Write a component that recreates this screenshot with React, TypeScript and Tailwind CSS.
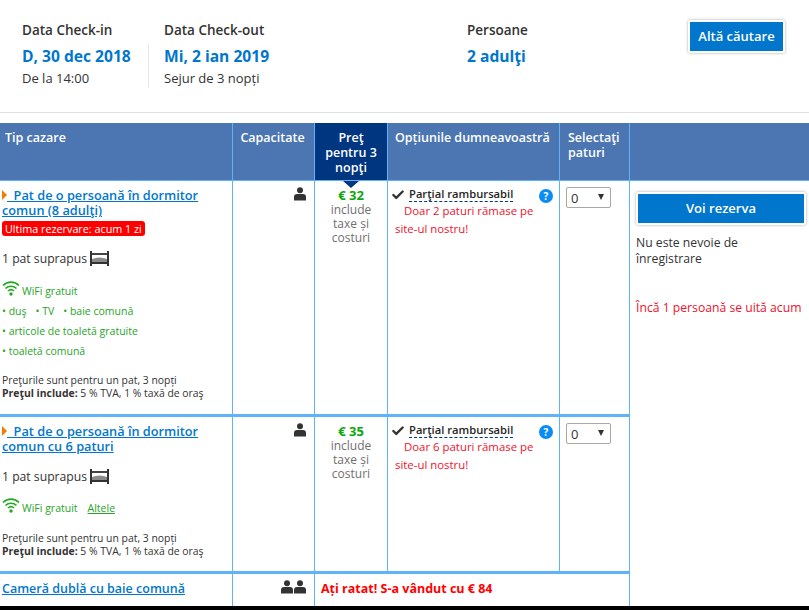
import { Check } from "lucide-react";

function Person({ className = "" }: { className?: string }) {
  return (
    <svg viewBox="0 0 12 14" className={"w-3 h-3.5 text-[#333] fill-current " + className}>
      <circle cx="6" cy="3.2" r="3" />
      <path d="M0 13.500V10a3 3 0 0 1 3-3h6a3 3 0 0 1 3 3v3.500z" />
    </svg>
  );
}

function Bed() {
  return (
    <svg viewBox="0 0 19 15" className="w-[19px] h-[15px] ml-[3px] -mt-[2px]">
      <rect x="0" y="0" width="2" height="15" fill="#333" />
      <rect x="17" y="0" width="2" height="15" fill="#333" />
      <rect x="2" y="2" width="15" height="2" fill="#444" />
      <path d="M2 8q7.500-3 15 0v3H2z" fill="#8a8a8a" />
      <rect x="2" y="11" width="15" height="2" fill="#333" />
    </svg>
  );
}

function Wifi() {
  return (
    <svg viewBox="0 0 18 16" className="w-[18px] h-4 shrink-0 fill-none stroke-[#22a922]">
      <path d="M1 5.500C5.500 1 12.500 1 17 5.500" strokeWidth="1.600" />
      <path d="M3.500 8.500c3-3 8-3 11 0" strokeWidth="1.600" />
      <path d="M6 11c1.700-1.500 4.300-1.500 6 0" strokeWidth="1.600" />
      <circle cx="9" cy="14" r="1.700" className="fill-[#22a922] stroke-none" />
    </svg>
  );
}

function Arrow() {
  return <span className="inline-block w-0 h-0 border-y-[5px] border-y-transparent border-l-[5px] border-l-[#f07d00]" />;
}

function Options({ left }: { left: number }) {
  return (
    <div className="relative border-r border-[#5fb3fb] pl-[3px] pt-[6px]">
      <div className="flex items-center text-[11.2px] leading-[14px]">
        <Check size={14} strokeWidth={4} className="text-[#333] mr-[4px] shrink-0" />
        <span className="font-semibold text-[#262626] border-b border-dashed border-[#003580]">Parţial rambursabil</span>
      </div>
      <span className="absolute right-[6px] top-[8px] w-[14px] h-[14px] rounded-full bg-[#0a8cf5] text-white text-[10px] leading-[14px] font-bold text-center">?</span>
      <p className="text-[11.4px] leading-[18px] text-[#f0122d] pr-2">
        <span className="pl-[13px]">Doar {left} paturi rămase pe</span>
        <br />
        <span className="pl-[4px]">site-ul nostru!</span>
      </p>
    </div>
  );
}

function Price({ value }: { value: number }) {
  return (
    <div className="h-full border-r border-[#5fb3fb] pt-[7px] text-center">
      <div className="text-[13px] leading-[15px] font-bold text-[#0aa80a]">€ {value}</div>
      <div className="text-[12px] leading-[14px] text-[#707070]">
        include
        <br />
        taxe și
        <br />
        costuri
      </div>
    </div>
  );
}

function Select() {
  return (
    <div className="border-r border-[#5fb3fb] pl-[6px] pt-[6px]">
      <div className="relative w-[45px] h-[21px] border border-[#a8a8a8] rounded-[2px] bg-white pl-1 text-[13px] leading-[21px] text-[#333]">
        0
        <span className="absolute right-[6px] top-[6px] w-0 h-0 border-x-[3.500px] border-x-transparent border-t-[6px] border-t-[#333]" />
      </div>
    </div>
  );
}

function PriceNote() {
  return (
    <div className="text-[10.4px] leading-[13px] text-[#333] whitespace-nowrap">
      Preţurile sunt pentru un pat, 3 nopți
      <br />
      <span className="font-bold">Preţul include:</span> 5 % TVA, 1 % taxă de oraş
    </div>
  );
}

export default function App() {
  return (
    <div className="w-[809px] h-[610px] overflow-hidden bg-black font-['Open_Sans',sans-serif]">
      <div className="h-[606px] bg-white">
        <div className="flex h-[112px]">
          <div className="pl-[22px] pt-[22px] w-[148px] text-[#333]">
            <div className="text-[13.500px] leading-4 font-semibold whitespace-nowrap">Data Check-in</div>
            <div className="text-[15.600px] leading-5 font-bold text-[#0077cc] mt-[8px] whitespace-nowrap">D, 30 dec 2018</div>
            <div className="text-[13px] leading-4 mt-[4px]">De la 14:00</div>
          </div>
          <div className="relative pl-[16px] pt-[22px] w-[319px] text-[#333] before:content-[''] before:absolute before:left-0 before:top-[44px] before:h-[44px] before:w-px before:bg-[#e6e6e6]">
            <div className="text-[13.500px] leading-4 font-semibold">Data Check-out</div>
            <div className="text-[15.600px] leading-5 font-bold text-[#0077cc] mt-[8px] whitespace-nowrap">Mi, 2 ian 2019</div>
            <div className="text-[13px] leading-4 mt-[4px]">Sejur de 3 nopți</div>
          </div>
          <div className="pt-[22px] w-[221px] text-[#333]">
            <div className="text-[13.500px] leading-4 font-semibold">Persoane</div>
            <div className="text-[15.600px] leading-5 font-bold text-[#0077cc] mt-[8px]">2 adulţi</div>
          </div>
          <div className="pt-[20px]">
            <div className="w-[97px] h-[33px] border-2 border-white bg-[#0077cc] shadow-[0_0_3px_rgba(0,0,0,0.35)] text-white text-[13px] font-semibold leading-[29px] text-center rounded-[2px]">
              Altă căutare
            </div>
          </div>
        </div>
        <div className="h-px bg-[#e0e0e0]" />
        <div className="mt-[10px] grid grid-cols-[233px_82px_73px_172px_70px_179px] grid-rows-[58px_233px_3px_154px_3px_32px]">
          <div className="bg-[#4c76b2] border-r border-b border-[#5fb3fb] pl-[5px] pt-[7px] text-white text-[12.500px] leading-[15px] font-semibold">Tip cazare</div>
          <div className="bg-[#4c76b2] border-r border-b border-[#5fb3fb] text-center pr-[2px] pt-[7px] text-white text-[12.500px] leading-[15px] font-semibold">Capacitate</div>
          <div className="bg-[#003580] border-r border-b border-[#5fb3fb] text-center pt-[7px] text-white text-[12.500px] leading-[15px] font-semibold">
            Preţ
            <br />
            pentru 3
            <br />
            nopţi
          </div>
          <div className="bg-[#4c76b2] border-r border-b border-[#5fb3fb] pl-[7px] pt-[7px] text-white text-[12.500px] leading-[15px] font-semibold whitespace-nowrap">Opțiunile dumneavoastră</div>
          <div className="bg-[#4c76b2] border-r border-b border-[#5fb3fb] pl-[8px] pt-[7px] text-white text-[12.500px] leading-[15px] font-semibold">
            Selectaţi
            <br />
            paturi
          </div>
          <div className="bg-[#4c76b2] border-b border-[#5fb3fb]" />

          {/* camera 1 */}
          <div className="border-r border-[#5fb3fb] pl-[2px] pt-[7px]">
            <a className="block text-[12.750px] leading-[15px] font-semibold text-[#0077cc] underline whitespace-nowrap">
              <Arrow />
              &nbsp; Pat de o persoană în dormitor
              <br />
              comun (8 adulţi)
            </a>
            <div className="w-fit mt-[3px] h-[15px] rounded-[3px] bg-[#ff0000] px-[3px] text-white text-[10.800px] leading-[15px] whitespace-nowrap">Ultima rezervare: acum 1 zi</div>
            <div className="mt-[15px] text-[12.200px] leading-4 text-[#333] flex items-center">1 pat suprapus<Bed /></div>
            <div className="mt-[13px] flex items-start text-[10.500px] leading-[14px] text-[#28a428]">
              <Wifi />
              <span className="ml-[2px] mt-[4px]">WiFi gratuit</span>
            </div>
            <div className="mt-[3px] text-[10.500px] leading-[20px] text-[#28a428]">
              <div className="flex gap-[9px]">
                <span>• duş</span>
                <span>• TV</span>
                <span>• baie comună</span>
              </div>
              <div>• articole de toaletă gratuite</div>
              <div>• toaletă comună</div>
            </div>
            <div className="mt-[13px]"><PriceNote /></div>
          </div>
          <div className="border-r border-[#5fb3fb] flex justify-end pr-[8px] pt-[6px]"><Person /></div>
          <div className="relative">
            <Price value={32} />
            <span className="absolute left-[28px] top-0 w-0 h-0 border-x-[8px] border-x-transparent border-t-[7px] border-t-[#003580]" />
          </div>
          <Options left={2} />
          <Select />
          <div className="row-span-5 px-[6px] pt-[11px]">
            <div className="w-[170px] h-[33px] border-2 border-white bg-[#0077cc] shadow-[0_0_3px_rgba(0,0,0,0.35)] text-white text-[13px] font-semibold leading-[29px] text-center rounded-[2px]">Voi rezerva</div>
            <div className="mt-[10px] text-[12.200px] leading-[16px] text-[#333]">
              Nu este nevoie de
              <br />
              înregistrare
            </div>
            <div className="mt-[33px] text-[12.200px] leading-4 text-[#f0122d] whitespace-nowrap">Încă 1 persoană se uită acum</div>
          </div>

          <div className="col-span-5 bg-[#5fb3fb]" />

          {/* camera 2 */}
          <div className="border-r border-[#5fb3fb] pl-[2px] pt-[7px]">
            <a className="block text-[12.750px] leading-[15px] font-semibold text-[#0077cc] underline whitespace-nowrap">
              <Arrow />
              &nbsp; Pat de o persoană în dormitor
              <br />
              comun cu 6 paturi
            </a>
            <div className="mt-[15px] text-[12.200px] leading-4 text-[#333] flex items-center">1 pat suprapus<Bed /></div>
            <div className="mt-[12px] flex items-start text-[10.500px] leading-[14px] text-[#28a428]">
              <Wifi />
              <span className="ml-[2px] mt-[4px]">WiFi gratuit</span>
              <a className="ml-[10px] mt-[4px] underline">Altele</a>
            </div>
            <div className="mt-[17px]"><PriceNote /></div>
          </div>
          <div className="border-r border-[#5fb3fb] flex justify-end pr-[8px] pt-[6px]"><Person /></div>
          <Price value={35} />
          <Options left={6} />
          <Select />

          <div className="col-span-5 bg-[#5fb3fb]" />

          {/* camera 3 */}
          <div className="border-r border-[#5fb3fb] pl-[2px] pt-[7px]">
            <a className="block text-[12.500px] leading-[15px] font-semibold text-[#0077cc] underline whitespace-nowrap">Cameră dublă cu baie comună</a>
          </div>
          <div className="border-r border-[#5fb3fb] flex justify-end gap-[1px] pr-[8px] pt-[6px]"><Person /><Person /></div>
          <div className="col-span-3 border-r border-[#5fb3fb] pl-[6px] pt-[7px] text-[12.500px] leading-[15px] font-bold text-[#ff0000]">Ați ratat! S-a vândut cu € 84</div>
        </div>
      </div>
    </div>
  );
}
